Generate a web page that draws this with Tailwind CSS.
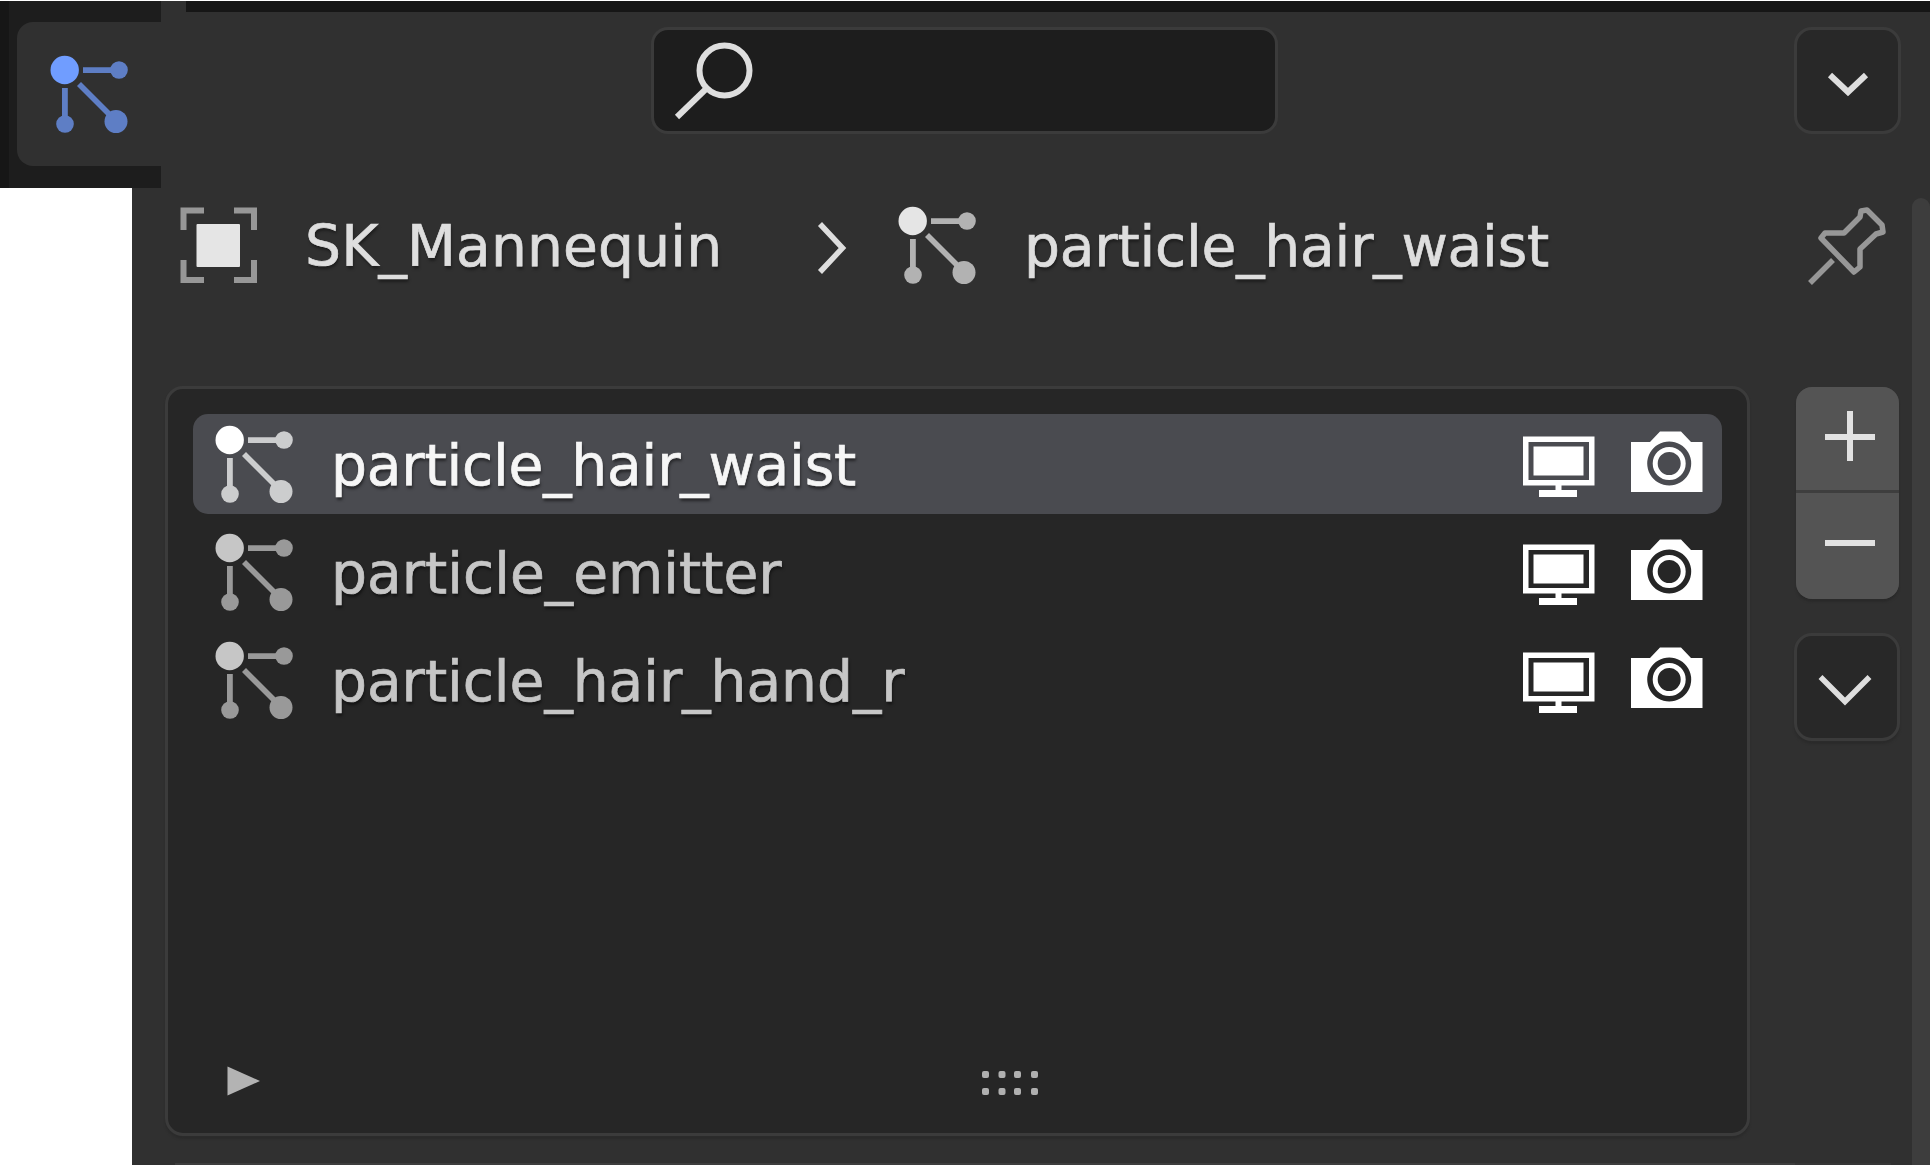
<!DOCTYPE html>
<html lang="en">
<head>
<meta charset="utf-8">
<title>Particle properties</title>
<script src="https://cdn.jsdelivr.net/npm/@tailwindcss/browser@4"></script>
</head>
<body class="bg-white w-[1930px] h-[1165px] overflow-hidden font-['DejaVu_Sans',sans-serif] text-[56.7px] leading-none [-webkit-text-stroke:0.7px_currentColor]">
<svg class="hidden">
  <symbol id="particles" viewBox="0 0 78 78">
    <g opacity=".72" fill="currentColor">
      <path d="M33 12.2H62V18H33ZM12 33h5.800V62H12ZM31 27L64 60L60 64L27 31Z"/>
      <circle cx="69" cy="15" r="8.800"/><circle cx="15" cy="69" r="8.800"/><circle cx="66" cy="66.500" r="11.500"/>
    </g>
    <circle cx="14.700" cy="15" r="14.200" fill="currentColor"/>
  </symbol>
  <symbol id="monitor" viewBox="0 0 72 66">
    <path fill="currentColor" fill-rule="evenodd" d="M0 5.500H71.500V54.500H38.500V59H54V66H16V59H32.500V54.500H0ZM5.500 11V49H66V11Z"/>
    <path fill="currentColor" d="M10.500 15.500H60.500V44.500H10.500Z"/>
  </symbol>
  <symbol id="camera" viewBox="0 0 72 66">
    <path fill="currentColor" fill-rule="evenodd" d="M0 11H19L29 .500H50L60 11H71.500V61H0ZM38.200 10.500a22 22 0 1 0 .01 0Z"/>
    <circle cx="38.200" cy="32.500" r="14" fill="none" stroke="currentColor" stroke-width="5"/>
  </symbol>
</svg>

<div class="relative pt-px h-[1165px]">
  <main class="ml-[132px] h-[1164px] bg-[#303030] flex flex-col">
    <div class="ml-[54px] h-[11px] bg-[#161616] shrink-0"></div>

    <header class="h-[122px] shrink-0 flex items-start justify-between pt-[15px] pl-[519px] pr-[29px]">
      <div class="w-[627px] h-[107px] rounded-[17px] border-[3px] border-[#3b3b3b] bg-[#1d1d1d] pl-[20px] pt-[11px]">
        <svg class="w-[84px] h-[84px]" viewBox="0 0 84 84" fill="none" stroke="#dedede" stroke-width="6">
          <circle cx="50.500" cy="29.500" r="25"/><path d="M33 47L3 76"/>
        </svg>
      </div>
      <button class="w-[107px] h-[107px] rounded-[18px] border-[3px] border-[#3b3b3b] bg-[#282828] flex items-center justify-center">
        <svg class="w-[44px] h-[30px] mt-2" viewBox="0 0 44 30" fill="none" stroke="#dedede" stroke-width="6"><path d="M4 5L22 22L40 5"/></svg>
      </button>
    </header>

    <div class="flex-1 flex min-h-0">
      <section class="w-[1780px] flex flex-col shrink-0">
        <nav class="h-[252px] shrink-0 flex items-start pt-[72px] pl-[48px] text-[#dedede]">
          <svg class="w-[78px] h-[78px] shrink-0" viewBox="0 0 78 78">
            <path d="M3.500 24V4.500H24M54 4.500H74V24M74 54V74H54M24 74H3.500V54" fill="none" stroke="#979797" stroke-width="6"/>
            <rect x="16.500" y="18" width="43.500" height="43" rx="1" fill="#e5e5e5"/>
          </svg>
          <span class="ml-[47px] w-[419px] mt-[12px] whitespace-nowrap tracking-[0.15px] [text-shadow:1px_3px_3px_#00000066]">SK_Mannequin</span>
          <svg class="ml-[90px] w-[34px] h-[56px] mt-[14px] shrink-0" viewBox="0 0 34 56" fill="none" stroke="#dedede" stroke-width="5.500"><path d="M6 4L28.500 28L6 52"/></svg>
          <svg class="ml-[50px] w-[78px] h-[78px] shrink-0 text-[#e5e5e5]"><use href="#particles"/></svg>
          <span class="ml-[48px] w-[527px] mt-[12px] whitespace-nowrap tracking-[-0.2px] [text-shadow:1px_3px_3px_#00000066]">particle_hair_waist</span>
          <svg class="ml-[256px] w-[80px] h-[80px] shrink-0" viewBox="0 0 80 80" fill="none" stroke="#979797" stroke-width="5.500" stroke-linejoin="round">
            <path d="M54 5L60 4L75 19L76 26L69 28L53 43V61L47 66L14 32L18 27H37L53 11ZM26 54L3 77"/>
          </svg>
        </nav>

        <div class="flex">
          <div class="ml-[33px] w-[1585px] h-[750px] rounded-[18px] border-[3px] border-[#3b3b3b] bg-[#262626] flex flex-col pt-[25px] px-[25px] shadow-[0_3px_2px_#2b2b2b]">
            <div class="flex flex-col gap-[8px] text-[#c6c6c6] [text-shadow:1px_3px_3px_#00000080]">
              <div class="h-[100px] rounded-[15px] bg-[#4a4b50] text-white flex items-start pt-[11px] pl-[22px]">
                <svg class="w-[78px] h-[78px]"><use href="#particles"/></svg>
                <span class="ml-[38px] mt-[12px] flex-1 text-[#f6f6f6] tracking-[-0.2px]">particle_hair_waist</span>
                <svg class="w-[72px] h-[66px] mt-[6px] text-white"><use href="#monitor"/></svg>
                <svg class="w-[72px] h-[66px] mt-[6px] ml-[36px] mr-[19px] text-white"><use href="#camera"/></svg>
              </div>
              <div class="h-[100px] flex items-start pt-[11px] pl-[22px]">
                <svg class="w-[78px] h-[78px]"><use href="#particles"/></svg>
                <span class="ml-[38px] mt-[12px] flex-1">particle_emitter</span>
                <svg class="w-[72px] h-[66px] mt-[6px] text-white"><use href="#monitor"/></svg>
                <svg class="w-[72px] h-[66px] mt-[6px] ml-[36px] mr-[19px] text-white"><use href="#camera"/></svg>
              </div>
              <div class="h-[100px] flex items-start pt-[11px] pl-[22px]">
                <svg class="w-[78px] h-[78px]"><use href="#particles"/></svg>
                <span class="ml-[38px] mt-[12px] flex-1 tracking-[-0.05px]">particle_hair_hand_r</span>
                <svg class="w-[72px] h-[66px] mt-[6px] text-white"><use href="#monitor"/></svg>
                <svg class="w-[72px] h-[66px] mt-[6px] ml-[36px] mr-[19px] text-white"><use href="#camera"/></svg>
              </div>
            </div>
            <div class="mt-auto mb-[36px] flex items-center h-[32px]">
              <svg class="ml-[33px] w-[36px] h-[32px]" viewBox="0 0 36 32"><path d="M1.500 1.500L34 16L1.500 30.500Z" fill="#b3b3b3"/></svg>
              <svg class="ml-[718px] w-[60px] h-[28px] mt-[4px]" viewBox="0 0 60 28" fill="#b0b0b0">
                <rect x="2" y="2" width="7" height="7" rx="2"/><rect x="18.500" y="2" width="7" height="7" rx="2"/><rect x="34" y="2" width="7" height="7" rx="2"/><rect x="51" y="2" width="7" height="7" rx="2"/>
                <rect x="2" y="19" width="7" height="7" rx="2"/><rect x="18.500" y="19" width="7" height="7" rx="2"/><rect x="34" y="19" width="7" height="7" rx="2"/><rect x="51" y="19" width="7" height="7" rx="2"/>
              </svg>
            </div>
          </div>

          <div class="ml-[44px] w-[107px] flex flex-col shrink-0">
            <div class="mx-[2px] mt-[1px] h-[212px] rounded-[16px] overflow-hidden bg-[#3e3e3e] flex flex-col gap-[3px] shadow-[0_3px_2px_#2a2a2a]">
              <button class="h-[103px] bg-[#545454] flex items-start justify-center pt-[24px] pl-[5px]">
                <svg class="w-[50px] h-[50px]" viewBox="0 0 50 50" stroke="#e2e2e2" stroke-width="6"><path d="M0 26H50M25 0V50"/></svg>
              </button>
              <button class="flex-1 bg-[#545454] flex items-start justify-center pt-[24px] pl-[5px]">
                <svg class="w-[50px] h-[50px]" viewBox="0 0 50 50" stroke="#e2e2e2" stroke-width="6"><path d="M0 26H50"/></svg>
              </button>
            </div>
            <button class="mt-[34px] h-[108px] w-[106px] rounded-[18px] border-[3px] border-[#3b3b3b] bg-[#282828] flex justify-center pt-[36px] pr-[4px] shadow-[0_3px_2px_#2b2b2b]">
              <svg class="w-[54px] h-[36px] shrink-0" viewBox="0 0 54 36" fill="none" stroke="#dedede" stroke-width="5.500"><path d="M2.500 5L27 29.500L51.500 5"/></svg>
            </button>
          </div>
        </div>

        <div class="mt-auto ml-[43px] flex h-[2px]">
          <div class="w-[1620px] bg-[#3d3d3d]"></div>
          <div class="w-[96px] bg-[#363636]"></div>
        </div>
      </section>
      <div class="mt-[64px] flex-1 rounded-t-[9px] bg-[#3d3d3d]"></div>
    </div>
  </main>

  <aside class="absolute left-0 top-px w-[161px] h-[187px] bg-[#1d1d1d] flex">
    <div class="w-[9px] bg-[#161616]"></div>
    <div class="ml-[8px] mt-[21px] w-[144px] h-[144px] rounded-l-[16px] bg-[#303030] pl-[33px] pt-[33px]">
      <svg class="w-[78px] h-[78px] text-[#709dff]"><use href="#particles"/></svg>
    </div>
  </aside>
</div>
</body>
</html>
